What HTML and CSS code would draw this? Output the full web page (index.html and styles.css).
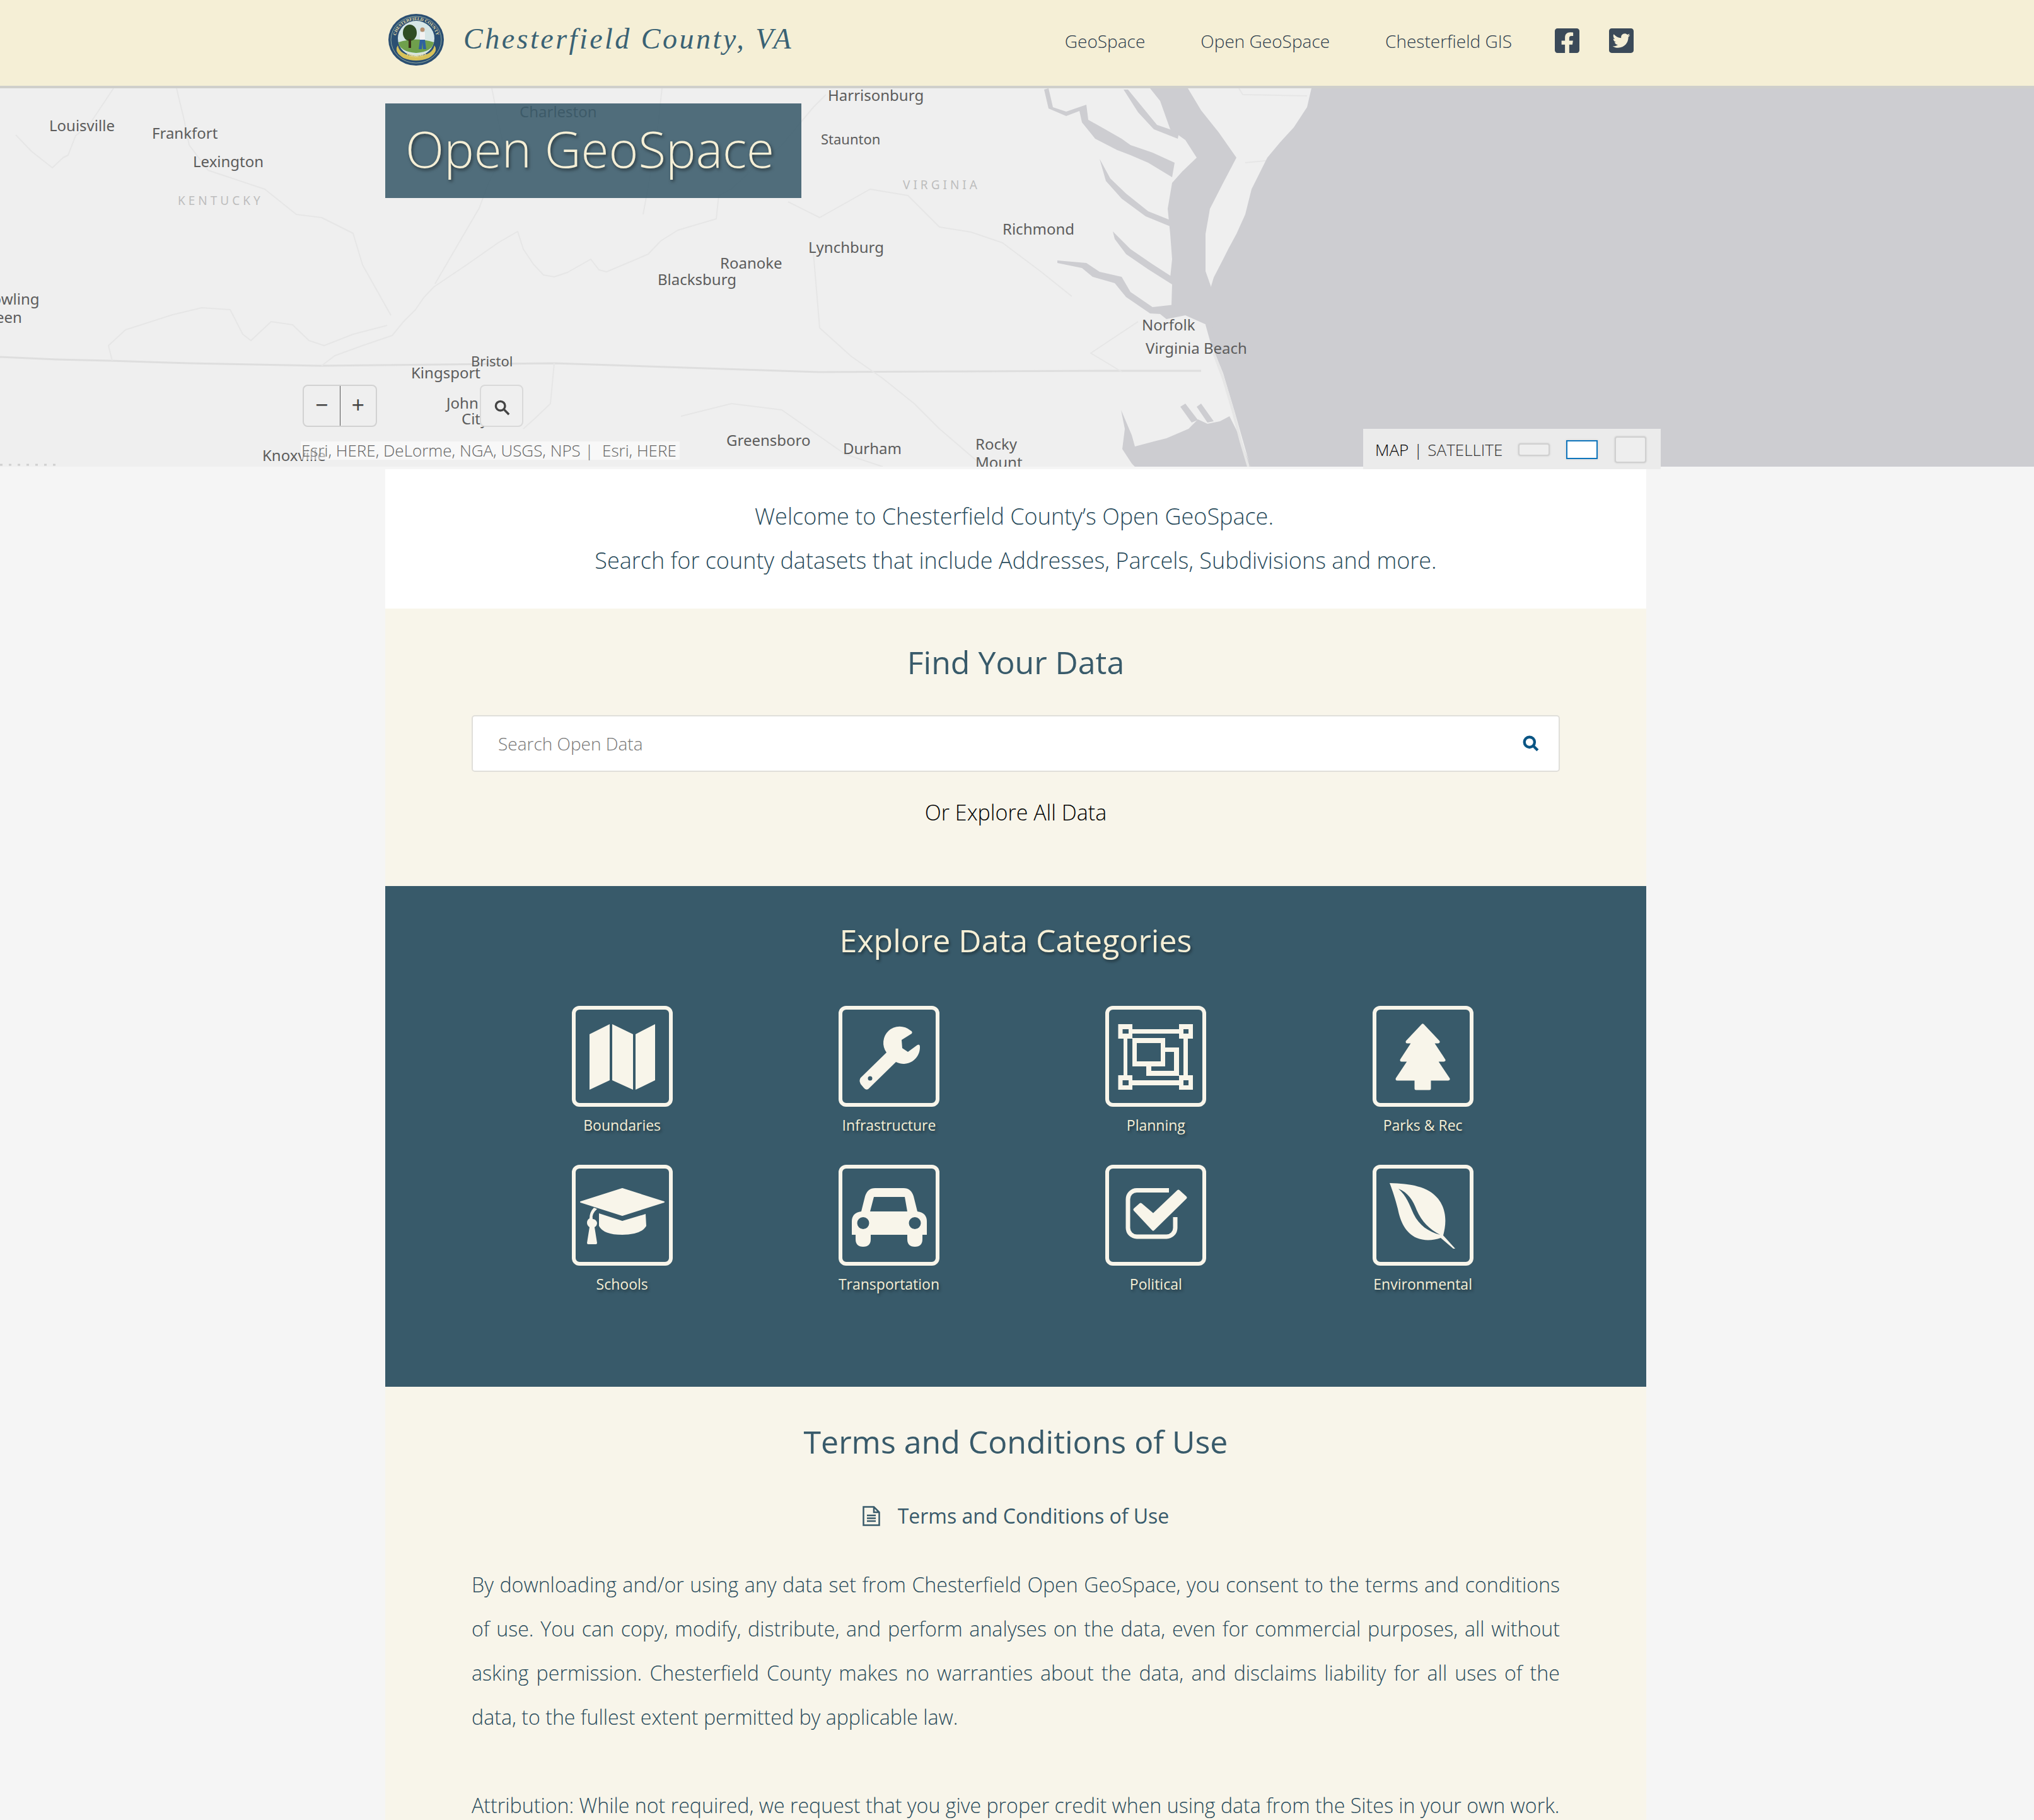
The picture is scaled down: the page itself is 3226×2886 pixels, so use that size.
FILE: index.html
```html
<!DOCTYPE html>
<html lang="en">

<head>
    <meta charset="UTF-8">
    <meta name="viewport" content="width=device-width, initial-scale=1.0">
    <title>Chesterfield County Open GeoSpace</title>
    <link rel="stylesheet" href="styles.css">
</head>

<body>
    <header class="topbar">
        <div class="topbar-inner">
            <a class="brand" href="#">
                <svg class="seal" viewBox="0 0 88 82">
                    <defs>
                        <path id="sealTop" d="M11 41 A33 31 0 0 1 77 41"></path>
                        <path id="sealBottom" d="M16 52 A30 26 0 0 0 72 52"></path>
                    </defs>
                    <ellipse cx="44" cy="41" rx="44" ry="41" fill="#2b4f72"></ellipse>
                    <ellipse cx="44" cy="41" rx="40" ry="37" fill="none" stroke="#8fa9a0" stroke-width="1"></ellipse>
                    <ellipse cx="44" cy="39" rx="29" ry="28" fill="#d6e6e6"></ellipse>
                    <path d="M16 45 Q44 36 72 45 Q70 60 44 62 Q18 60 16 45z" fill="#6fa04c"></path>
                    <path d="M15 50 Q8 60 24 70 Q44 78 64 70 Q80 60 73 50 Q70 66 44 67 Q18 66 15 50z" fill="#d8c25a"></path>
                    <ellipse cx="34" cy="30" rx="11" ry="13" fill="#2f4d24"></ellipse>
                    <rect x="32" y="40" width="4" height="14" fill="#3a3018"></rect>
                    <circle cx="54" cy="25" r="3.5" fill="#b58f6f"></circle>
                    <rect x="50" y="29" width="8" height="12" fill="#f2f2f2"></rect>
                    <path d="M50 41 H58 L60 56 H55 L54 45 L53 56 H48z" fill="#2f62a0"></path>
                    <text class="seal-text"><textPath href="#sealTop" startOffset="50%">CHESTERFIELD COUNTY</textPath></text>
                    <text class="seal-text"><textPath href="#sealBottom" startOffset="50%">VIRGINIA</textPath></text>
                </svg>
                <span class="brand-name">Chesterfield County, VA</span>
            </a>
            <nav class="topnav">
                <a href="#">GeoSpace</a>
                <a href="#">Open GeoSpace</a>
                <a href="#">Chesterfield GIS</a>
            </nav>
            <div class="social">
                <svg viewBox="0 32 448 448"><path d="M400 32H48A48 48 0 0 0 0 80v352a48 48 0 0 0 48 48h137.25V327.69h-63V256h63v-54.64c0-62.15 37-96.48 93.67-96.48 27.14 0 55.52 4.84 55.52 4.84v61h-31.27c-30.81 0-40.42 19.12-40.42 38.73V256h68.78l-11 71.69h-57.78V480H400a48 48 0 0 0 48-48V80a48 48 0 0 0-48-48z"></path></svg>
                <svg viewBox="0 32 448 448"><path d="M400 32H48C21.5 32 0 53.5 0 80v352c0 26.5 21.5 48 48 48h352c26.5 0 48-21.5 48-48V80c0-26.5-21.5-48-48-48zm-48.9 158.8c.2 2.8.2 5.7.2 8.5 0 86.7-66 186.6-186.6 186.6-37.2 0-71.7-10.8-100.7-29.4 5.3.6 10.4.8 15.8.8 30.7 0 58.9-10.4 81.4-28-28.8-.6-53-19.5-61.3-45.5 10.1 1.5 19.2 1.5 29.6-1.2-30-6.1-52.5-32.5-52.5-64.4v-.8c8.7 4.9 18.9 7.9 29.6 8.3a65.447 65.447 0 0 1-29.2-54.6c0-12.2 3.2-23.4 8.9-33.1 32.3 39.8 80.8 65.8 135.2 68.6-9.3-44.5 24-80.6 64-80.6 18.9 0 35.9 7.9 47.9 20.7 14.8-2.8 29-8.3 41.6-15.8-4.9 15.2-15.1 27.9-28.6 35.9 13.1-1.4 25.8-5 37.5-10.1-8.9 13-20 24.6-32.4 33.6z"></path></svg>
            </div>
        </div>
    </header>

    <section class="map">
        <!-- basemap: coordinates are page pixels, y starts under the header -->
        <svg class="map-canvas" viewBox="0 140 3226 600" preserveAspectRatio="none">
            <g class="lines">
                <path class="border-main" d="M0 566 L90 570 L174 572 L300 576 L506 580 L700 578 L879 576 L1000 580 L1300 590 L1500 589 L1736 588 L1905 588"></path>
                <path class="border" d="M510 580 L531 564 L575 548 L622 532 L640 510 L659 491 L672 472 L688 455 L740 420 L790 385 L821 367 L830 395 L846 419 L862 436 L879 439 L900 432 L937 411 L950 428 L962 431 L1000 415 L1028 403 L1048 382 L1075 365 L1136 347 L1140 310 L1160 300 L1200 262 L1240 230 L1290 170 L1310 150"></path>
                <path class="border" d="M879 576 L873 640 L850 662 L830 680 M1965 140 L1971 150 L2073 152 M1975 258 L2017 254"></path>
                <path class="border" d="M178 572 L172 548 L199 523 L274 499 L320 488 L365 491 L385 530 L398 540 L430 510 L464 515 L490 540 L514 548 L560 530 L614 516 M25 214 L50 240 L83 266 L100 250 L108 246 L120 215 L140 200 L180 140"></path>
                <path class="border" d="M280 140 L292 190 L300 230 L330 270 L375 285 L420 300 L470 340 L510 345 L560 370 L575 420 L620 500"></path>
                <path class="border" d="M1250 320 L1300 345 L1380 300 L1440 310 L1490 360 L1540 368 L1590 385 L1650 430 L1700 470 M1290 400 L1300 520 L1350 565 L1400 600 L1450 640 L1490 680 L1560 740"></path>
                <path class="border" d="M780 140 L800 240 L775 290 L760 330 L690 450 M1050 140 L1040 230 L1020 340 M1080 660 L1160 640 L1240 650 L1340 720 L1400 740 M1780 590 L1730 560 L1805 510"></path>
            </g>

            <path class="water" d="M2080 140 L2073 170 L2052 202 L2030 226 L2010 250 L1985 300 L1975 340 L1961 371 L1948 395 L1940 411 L1925 440 L1917 467 L1912 515 L1919 540 L1940 592 L1958 652 L1982 736 L1984 740 L3226 740 L3226 140z"></path>
            <path class="water" d="M1824 140 L1840 160 L1856 205 L1880 222 L1898 250 L1875 272 L1859 290 L1852 331 L1856 371 L1859 411 L1856 440 L1859 451 L1858 484 L1840 498 L1850 506 L1880 500 L1925 520 L1925 467 L1912 430 L1912 371 L1919 331 L1940 290 L1961 250 L1933 210 L1905 175 L1884 140z"></path>
            <path class="water" d="M1663 140 L1670 170 L1691 177 L1723 166 L1726 190 L1744 200 L1779 220 L1793 230 L1828 242 L1863 258 L1859 281 L1821 258 L1793 246 L1772 238 L1737 220 L1716 194 L1712 176 L1691 184 L1663 172 L1656 142z"></path>
            <path class="water" d="M1744 252 L1761 283 L1786 307 L1821 335 L1856 349 L1856 359 L1817 343 L1779 315 L1754 287z"></path>
            <path class="water" d="M1765 367 L1793 395 L1828 419 L1859 439 L1859 451 L1821 427 L1786 403 L1768 379z"></path>
            <path class="water" d="M1677 413 L1723 417 L1744 431 L1779 439 L1793 463 L1828 487 L1863 483 L1859 499 L1824 497 L1786 471 L1768 449 L1733 439 L1716 425 L1677 417z"></path>
            <path class="water" d="M1789 142 L1812 170 L1835 198 L1870 210 L1868 220 L1830 205 L1805 178 L1782 142z"></path>
            <path class="water" d="M1778 650 L1784 680 L1780 712 L1795 735 L1800 740 L1984 740 L1965 690 L1950 660 L1935 668 L1915 672 L1900 665 L1885 680 L1850 695 L1830 700 L1800 708 L1795 690z"></path>
            <path class="water" d="M1880 640 L1900 666 L1890 670 L1872 645z M1905 640 L1925 668 L1915 670 L1898 645z"></path>
            <path class="sandbar" d="M1925 560 L1940 600 L1955 650 L1968 700 L1980 740"></path>
            <path class="scale" d="M0 737 H88"></path>

            <g transform="translate(0 1.5)">
                <text class="place" x="78" y="206">Louisville</text>
                <text class="place" x="241" y="218">Frankfort</text>
                <text class="place" x="306" y="263">Lexington</text>
                <text class="state" x="282" y="323">KENTUCKY</text>
                <text class="place" x="-28" y="481">Bowling</text>
                <text class="place" x="-34" y="510">Green</text>
                <text class="place" x="824" y="184">Charleston</text>
                <text class="place" x="1313" y="158">Harrisonburg</text>
                <text class="place place-small" x="1302" y="227">Staunton</text>
                <text class="state" x="1432" y="298">VIRGINIA</text>
                <text class="place" x="1590" y="370">Richmond</text>
                <text class="place" x="1282" y="399">Lynchburg</text>
                <text class="place" x="1142" y="424">Roanoke</text>
                <text class="place" x="1043" y="450">Blacksburg</text>
                <text class="place" x="1811" y="522">Norfolk</text>
                <text class="place" x="1817" y="559">Virginia Beach</text>
                <text class="place place-small" x="747" y="579">Bristol</text>
                <text class="place" x="652" y="598">Kingsport</text>
                <text class="place" x="708" y="646">John</text>
                <text class="place" x="732" y="671">City</text>
                <text class="place" x="416" y="729">Knoxville</text>
                <text class="place" x="1152" y="705">Greensboro</text>
                <text class="place" x="1337" y="718">Durham</text>
                <text class="place" x="1547" y="711">Rocky</text>
                <text class="place" x="1547" y="740">Mount</text>
            </g>
        </svg>

        <h1 class="map-title">Open GeoSpace</h1>

        <div class="zoom-ctrl">
            <span class="zoom-btn">&minus;</span>
            <span class="zoom-btn">+</span>
        </div>
        <div class="map-search">
            <svg viewBox="0 0 24 24"><circle cx="9.5" cy="9.5" r="6.5"></circle><path d="M14.5 14.5 L21.5 21.5"></path></svg>
        </div>
        <div class="attribution">Esri, HERE, DeLorme, NGA, USGS, NPS |&nbsp; Esri, HERE</div>
        <div class="basemap">
            <span class="basemap-on">MAP</span>
            <span class="basemap-sep">|</span>
            <span class="basemap-off">SATELLITE</span>
            <span class="swatch swatch-small"></span>
            <span class="swatch swatch-active"></span>
            <span class="swatch swatch-large"></span>
        </div>
    </section>

    <main class="content">
        <section class="welcome">
            <p class="welcome-first">Welcome to Chesterfield County’s Open GeoSpace.</p>
            <p>Search for county datasets that include Addresses, Parcels, Subdivisions and more.</p>
        </section>

        <section class="find">
            <h2>Find Your Data</h2>
            <form class="search-box">
                <span class="search-placeholder">Search Open Data</span>
                <svg viewBox="0 0 24 24"><circle cx="10" cy="10" r="7.5"></circle><path d="M15.5 15.5 L22 22"></path></svg>
            </form>
            <a class="explore-all" href="#">Or Explore All Data</a>
        </section>

        <section class="categories">
            <h2>Explore Data Categories</h2>
            <div class="cat-grid">
                <a class="cat" href="#">
                    <div class="cat-box">
                        <svg viewBox="6 6 148 148">
                            <path d="M28 45 L60 29 V118 L28 133z M64 29 L97 45 V133 L64 118z M101 45 L132 29 V118 L101 133z"></path>
                        </svg>
                    </div>
                    <span>Boundaries</span>
                </a>
                <a class="cat" href="#">
                    <div class="cat-box">
                        <svg viewBox="6 6 148 148">
                            <path fill-rule="evenodd" d="M114 39 Q118 41 116 44 L100 54 L101 67 L110 73 L125 62 Q129 60 129 65 A26 26 0 0 1 91 89 L47 132 Q43 134 40 130 L35 124 Q32 118 35 114 L76 74 A26 26 0 0 1 114 39z M50 111.5 A3.5 3.5 0 1 0 50 118.5 A3.5 3.5 0 1 0 50 111.5z"></path>
                        </svg>
                    </div>
                    <span>Infrastructure</span>
                </a>
                <a class="cat" href="#">
                    <div class="cat-box">
                        <svg viewBox="6 6 148 148">
                            <path fill-rule="evenodd" d="M20.5 29 H43 V37 H117 V29 H139 V52 H131 V110 H139 V133 H117 V126 H43 V133 H20.5 V110 H29 V52 H20.5z M27.5 37 V44 H37 V37z M124 37 V44 H132 V37z M27.5 118 V126 H37 V118z M124 118 V126 H132 V118z M35 52 V110 H43 V118 H117 V110 H124 V52 H117 V44 H43 V52z"></path>
                            <path fill-rule="evenodd" d="M43 51 H95 V96 H43z M50 59 V88 H88 V59z"></path>
                            <path d="M95 66 H117 V111 H65 V96 H73 V103 H109 V73 H95z"></path>
                        </svg>
                    </div>
                    <span>Planning</span>
                </a>
                <a class="cat" href="#">
                    <div class="cat-box">
                        <svg viewBox="6 6 148 148">
                            <path class="rounded" d="M79.5 31 L104 57 H94 L113 86 H100 L120 116 H90 V131 H69 V116 H39 L59 86 H46 L65 57 H55z"></path>
                        </svg>
                    </div>
                    <span>Parks &amp; Rec</span>
                </a>
                <a class="cat" href="#">
                    <div class="cat-box">
                        <svg viewBox="6 6 148 148">
                            <path class="rounded-thin" d="M14 59 L80 38 L146 59 L80 80z"></path>
                            <path d="M43 77 L80 89 L117 78 L118 97 Q110 111 80 111 Q50 111 43 97z"></path>
                            <path d="M40 70 Q31 78 33 86 A8 8 0 0 1 40 92 Q40 97 36 99 L40 124 Q40 126 38 126 H26 Q24 126 24 124 L28 99 Q24 96 24 92 A8 8 0 0 1 28 85 Q28 75 35 68z"></path>
                        </svg>
                    </div>
                    <span>Schools</span>
                </a>
                <a class="cat" href="#">
                    <div class="cat-box">
                        <svg viewBox="6 6 148 148">
                            <path fill-rule="evenodd" d="M36 74 L42 50 Q46 37 58 37 H103 Q115 37 119 50 L125 74 Q140 76 140 90 V111 H133 V118 Q133 130 121 130 Q109 130 109 118 V111 H51 V118 Q51 130 39 130 Q27 130 27 118 V111 H21 V90 Q21 76 36 74z M56 51 L50 74 H109 L105 51z M39 83 A9.5 9.5 0 1 0 39 102 A9.5 9.5 0 1 0 39 83z M121 83 A9.5 9.5 0 1 0 121 102 A9.5 9.5 0 1 0 121 83z"></path>
                        </svg>
                    </div>
                    <span>Transportation</span>
                </a>
                <a class="cat" href="#">
                    <div class="cat-box">
                        <svg viewBox="6 6 148 148">
                            <path class="check-box" d="M101 40.5 H50 A14 14 0 0 0 36 54.5 V100 A14 14 0 0 0 50 114 H97 A14 14 0 0 0 111 100 V83"></path>
                            <path class="rounded" d="M47 71 L56 63 L76 80 L116 42 L127 52 L76 102z"></path>
                        </svg>
                    </div>
                    <span>Political</span>
                </a>
                <a class="cat" href="#">
                    <div class="cat-box">
                        <svg viewBox="6 6 148 148">
                            <path d="M27 29 C60 30 88 34 104 54 C118 72 117 94 112 112 L131 133 H128 L108 116 C96 120 82 121 70 116 C52 108 44 90 40 70 C36 54 32 42 27 29z"></path>
                            <path class="leaf-vein" d="M41 38 C56 44 64 56 70 72 C78 90 90 102 107 111 C88 106 74 96 65 78 C58 62 54 50 41 38z"></path>
                        </svg>
                    </div>
                    <span>Environmental</span>
                </a>
            </div>
        </section>

        <section class="terms">
            <h2>Terms and Conditions of Use</h2>
            <a class="terms-link" href="#">
                <svg viewBox="0 0 28 32">
                    <path class="doc-line" d="M1.5 1.5 H18 L26.5 10 V30.5 H1.5z M18 1.5 V10 H26.5"></path>
                    <path class="doc-line" d="M7 15 H21 M7 19.5 H21 M7 24 H21"></path>
                </svg>
                <span>Terms and Conditions of Use</span>
            </a>
            <p>By downloading and/or using any data set from Chesterfield Open GeoSpace, you consent to the terms and conditions of use. You can copy, modify, distribute, and perform analyses on the data, even for commercial purposes, all without asking permission. Chesterfield County makes no warranties about the data, and disclaims liability for all uses of the data, to the fullest extent permitted by applicable law.</p>
            <p class="attribution-note">Attribution: While not required, we request that you give proper credit when using data from the Sites in your own work.</p>
        </section>
    </main>
</body>

</html>
```

FILE: styles.css
```css
html,
body {
    height: 2886px;
    overflow: hidden;
}

body {
    margin: 0;
    padding: 0;
    background-color: #f5f5f5;
    font-family: "Open Sans", sans-serif;
    color: #385a6a;
}

a {
    text-decoration: none;
    color: inherit;
}

/* top bar */
.topbar {
    height: 136px;
    background-color: #f5efd6;
    border-bottom: 4px solid #cfcfcb;
}

.topbar-inner {
    width: 2000px;
    height: 136px;
    margin-left: 611px;
    display: flex;
    align-items: center;
}

.brand {
    display: flex;
    align-items: center;
    padding-left: 5px;
    margin-top: -10px;
}

.seal {
    width: 88px;
    height: 82px;
}

.seal-text {
    font-family: "Liberation Serif", serif;
    font-size: 7px;
    font-weight: bold;
    fill: #e8dfa8;
    text-anchor: middle;
}

.brand-name {
    margin: -3px 0 0 31px;
    font-family: "Liberation Serif", serif;
    font-style: italic;
    font-size: 46px;
    letter-spacing: 3.5px;
    color: #3a6274;
}

.topnav {
    margin: -7px 0 0 auto;
    display: flex;
    gap: 88px;
    font-size: 28px;
    font-weight: 300;
    color: #2f3e4d;
}

.social {
    display: flex;
    gap: 47px;
    margin: -7px 20px 0 68px;
}

.social svg {
    width: 39px;
    height: 39px;
    fill: #3b4a59;
    display: block;
}

/* map */
.map {
    position: relative;
    height: 600px;
    margin-bottom: 4px;
    background-color: #efefef;
}

.map-canvas {
    position: absolute;
    left: 0;
    top: 0;
    width: 100%;
    height: 100%;
    overflow: hidden;
}

.water {
    fill: #cdcdd1;
}

.sandbar {
    fill: none;
    stroke: #e6e6e6;
    stroke-width: 4;
}

.scale {
    fill: none;
    stroke: #cfcfcf;
    stroke-width: 3;
    stroke-dasharray: 4 10;
}

.lines {
    filter: blur(0.7px);
}

.border-main {
    fill: none;
    stroke: #dedede;
    stroke-width: 3;
    stroke-linejoin: round;
}

.border {
    fill: none;
    stroke: #e6e6e6;
    stroke-width: 2;
    stroke-linejoin: round;
}

.place {
    font-family: "Noto Sans", sans-serif;
    font-size: 24px;
    fill: #5c5c5c;
}

.place-small {
    font-size: 22px;
}

.state {
    font-family: "Noto Sans", sans-serif;
    font-size: 19px;
    letter-spacing: 5px;
    fill: #bdbdbd;
}

.map-title {
    position: absolute;
    left: 611px;
    top: 24px;
    width: 660px;
    height: 150px;
    margin: 0;
    padding-left: 32px;
    box-sizing: border-box;
    background-color: rgba(56, 90, 106, 0.87);
    color: #f5efd6;
    font-size: 80px;
    font-weight: 300;
    line-height: 142px;
    text-shadow: 2px 3px 5px rgba(0, 0, 0, 0.5);
}

.zoom-ctrl {
    position: absolute;
    left: 480px;
    top: 470px;
    width: 118px;
    height: 67px;
    display: flex;
    box-sizing: border-box;
    background-color: #efefef;
    border: 2px solid #d2d2d2;
    border-radius: 8px;
}

.zoom-btn {
    flex: 1;
    text-align: center;
    font-size: 36px;
    font-weight: 400;
    line-height: 60px;
    color: #444;
}

.zoom-btn + .zoom-btn {
    border-left: 1px solid #555;
}

.map-search {
    position: absolute;
    left: 761px;
    top: 470px;
    width: 69px;
    height: 67px;
    box-sizing: border-box;
    padding: 21px 0 0 20px;
    background-color: #efefef;
    border: 2px solid #d9d9d9;
    border-radius: 8px;
}

.map-search svg {
    display: block;
    width: 27px;
    height: 27px;
    fill: none;
    stroke: #444;
    stroke-width: 3;
}

.attribution {
    position: absolute;
    left: 477px;
    top: 560px;
    width: 601px;
    height: 29px;
    box-sizing: border-box;
    padding-left: 1px;
    background-color: rgba(255, 255, 255, 0.55);
    font-size: 26px;
    font-weight: 300;
    line-height: 29px;
    color: #666;
    white-space: nowrap;
}

.basemap {
    position: absolute;
    left: 2162px;
    top: 540px;
    width: 472px;
    height: 64px;
    box-sizing: border-box;
    padding: 2px 0 0 19px;
    display: flex;
    align-items: center;
    background-color: #ebebeb;
    font-size: 26px;
    font-weight: 300;
    color: #333;
}

.basemap-on {
    color: #000;
}

.basemap-sep {
    margin: 0 8px;
    color: #111;
}

.swatch {
    box-sizing: border-box;
    width: 50px;
    background-color: #eee;
    border: 2px solid #d0d0d0;
    border-radius: 4px;
    box-shadow: 0 0 3px rgba(0, 0, 0, 0.15);
}

.swatch-small {
    height: 20px;
    margin-left: 25px;
}

.swatch-active {
    height: 30px;
    margin-left: 26px;
    background-color: #fff;
    border-color: #0f75bc;
    border-radius: 0;
}

.swatch-large {
    height: 42px;
    margin-left: 27px;
}

/* main column */
.content {
    width: 2000px;
    margin-left: 611px;
}

h2 {
    margin: 0;
    font-weight: 400;
    font-size: 50px;
    text-align: center;
}

.welcome {
    height: 221px;
    box-sizing: border-box;
    padding-top: 40px;
    background-color: #fff;
    text-align: center;
    font-size: 36px;
    font-weight: 300;
    line-height: 70px;
    color: #2a4c5c;
}

.welcome p {
    margin: 0;
}

.welcome .welcome-first {
    padding-right: 5px;
}

.find {
    height: 440px;
    box-sizing: border-box;
    padding: 50px 137px 0;
    background-color: #f8f5ea;
}

.find h2 {
    line-height: 70px;
}

.search-box {
    height: 90px;
    margin-top: 49px;
    padding: 0 31px 0 40px;
    box-sizing: border-box;
    display: flex;
    align-items: center;
    justify-content: space-between;
    background-color: #fff;
    border: 2px solid #e0dfda;
    border-radius: 5px;
}

.search-placeholder {
    font-size: 28px;
    font-weight: 300;
    color: #777;
}

.search-box svg {
    width: 26px;
    height: 26px;
    fill: none;
    stroke: #0a5584;
    stroke-width: 4;
}

.explore-all {
    display: block;
    margin-top: 29px;
    text-align: center;
    font-size: 34px;
    font-weight: 300;
    line-height: 70px;
    color: #000;
}

.categories {
    height: 794px;
    box-sizing: border-box;
    padding-top: 50px;
    background-color: #385a6a;
    color: #f5efd6;
}

.categories h2 {
    line-height: 72px;
    text-shadow: 2px 3px 4px rgba(0, 0, 0, 0.4);
}

.cat-grid {
    display: grid;
    grid-template-columns: repeat(4, 423.33px);
    grid-auto-rows: 252px;
    margin: 68px 0 0 164px;
}

.cat {
    display: flex;
    flex-direction: column;
    align-items: center;
}

.cat-box {
    box-sizing: border-box;
    width: 160px;
    height: 160px;
    border: 6px solid #f8f5ea;
    border-radius: 12px;
}

.cat-box svg {
    display: block;
    width: 148px;
    height: 148px;
    fill: #f8f5ea;
    overflow: visible;
}

.cat span {
    font-size: 23px;
    font-weight: 400;
    line-height: 58px;
    text-shadow: 2px 3px 4px rgba(0, 0, 0, 0.4);
}

.rounded {
    stroke: #f8f5ea;
    stroke-width: 5;
    stroke-linejoin: round;
}

.rounded-thin {
    stroke: #f8f5ea;
    stroke-width: 2;
    stroke-linejoin: round;
}

.check-box {
    fill: none;
    stroke: #f8f5ea;
    stroke-width: 7;
}

.leaf-vein {
    fill: #385a6a;
}

.terms {
    padding: 50px 137px 0;
    background-color: #f8f5ea;
}

.terms h2 {
    line-height: 74px;
}

.terms-link {
    display: flex;
    justify-content: center;
    align-items: center;
    gap: 28px;
    margin-top: 46px;
    font-size: 32px;
    font-weight: 400;
    line-height: 70px;
}

.terms-link svg {
    width: 28px;
    height: 32px;
}

.doc-line {
    fill: none;
    stroke: #385a6a;
    stroke-width: 2.5;
}

.terms p {
    margin: 39px 0 0;
    font-size: 32.15px;
    font-weight: 300;
    line-height: 70px;
    text-align: justify;
    color: #2a4c5c;
}

.terms p.attribution-note {
    margin-top: 70px;
}
```
